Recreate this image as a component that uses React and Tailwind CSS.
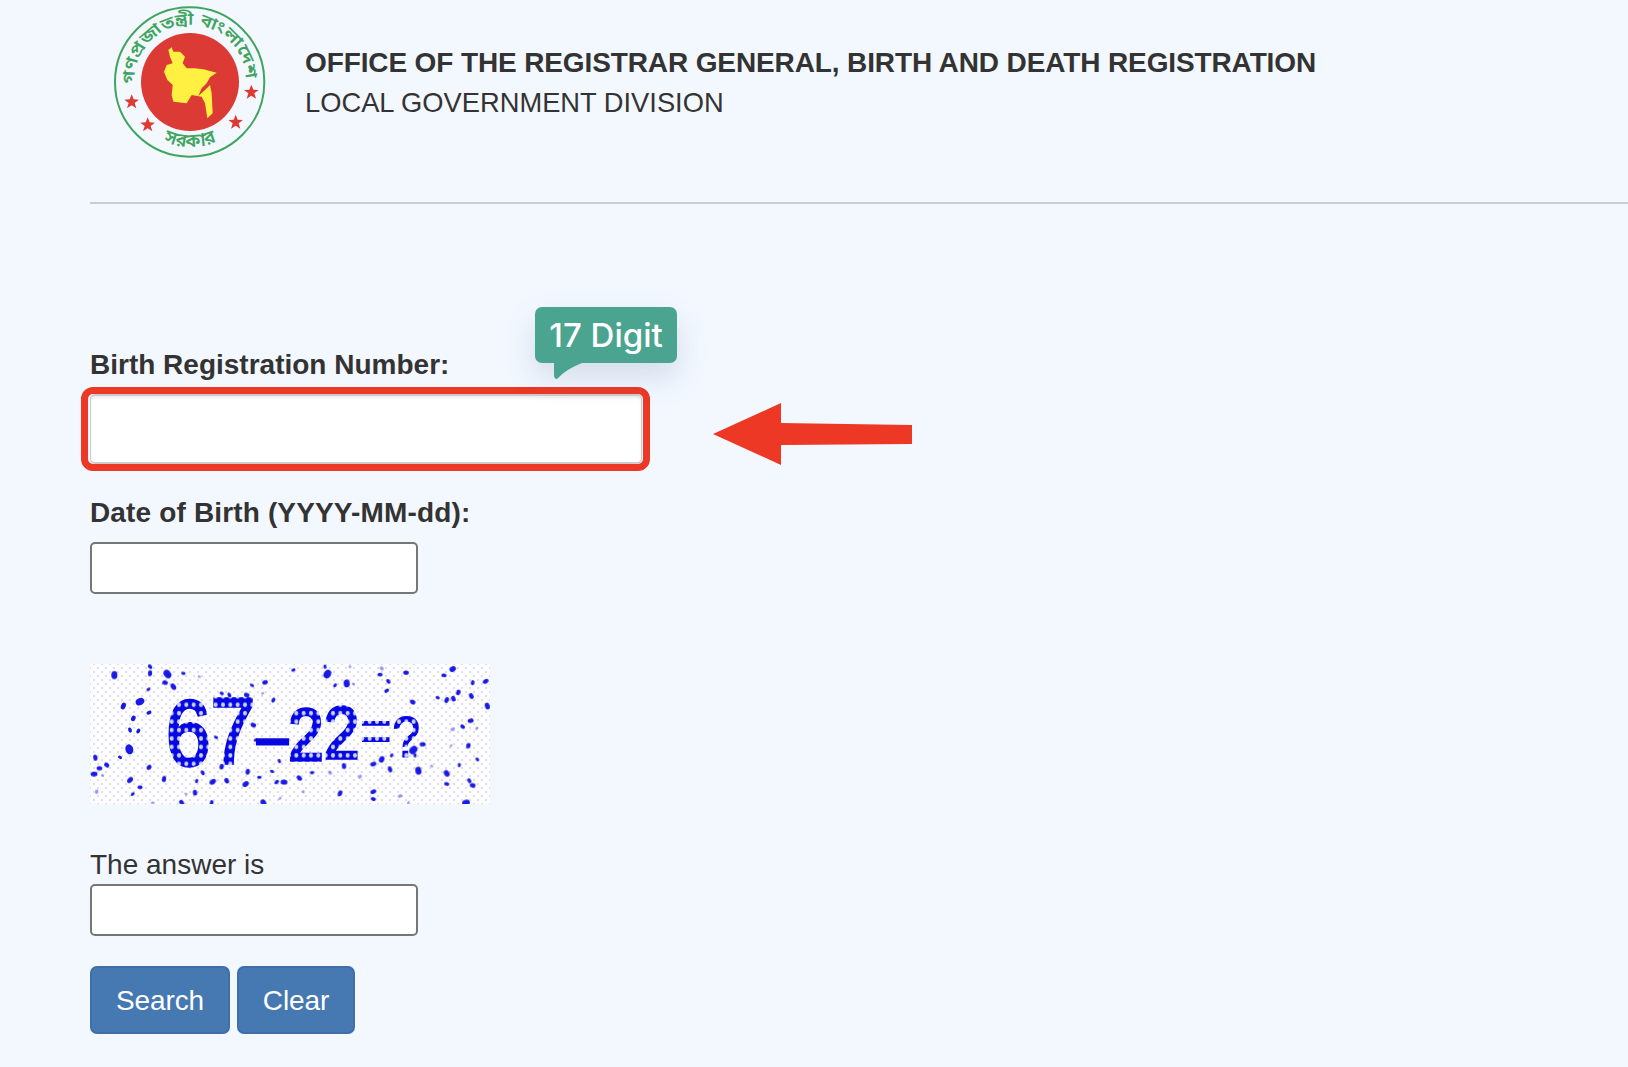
const SPECKS = [
  [103,75,7],[210,50,6],[210,70,7],[262,72,8],[310,70,5],[280,110,8],[255,98,5],[205,118,5],[358,80,4],[180,155,8],[130,168,8],[207,188,6],[160,205,5],[150,240,6],[175,243,6],
  [148,298,9],[120,322,5],[46,323,7],[80,345,5],[42,372,8],[68,376,4],[58,355,5],[150,390,8],[180,412,6],[207,352,5],[252,387,7],[158,432,5],[50,425,4],[305,458,7],[395,458,6],[550,458,6],
  [425,130,5],[448,135,6],[500,135,5],[548,130,4],[516,106,5],[555,97,5],[580,150,6],[640,60,5],[742,72,8],[735,50,5],[765,106,5],[800,100,7],[820,102,4],[810,50,4],[905,55,4],[900,74,6],[925,94,6],[978,68,5],[920,122,6],
  [1092,76,6],[1118,57,6],[1178,98,6],[1217,94,7],[1135,127,5],[1174,138,7],[1100,150,7],[1120,146,5],[1073,143,5],[1222,168,8],[998,156,5],[1172,212,7],[1148,230,6],[1118,238,4],[1190,235,4],
  [1028,283,7],[1000,300,8],[1005,316,5],[1113,287,4],[1165,287,5],[1192,328,5],[1138,345,5],[1100,370,6],[1100,402,6],[1168,392,6],[1178,406,5],[880,425,7],[880,447,6],[960,438,4],[780,430,7],
  [880,342,7],[905,328,6],[930,358,7],[935,316,5],[1015,362,7],[1055,348,4],[792,348,7],[750,368,4],[696,368,5],[658,384,7],[612,396,6],[590,396,6],[538,382,5],[497,402,6],[503,365,7],[398,395,8],[425,350,5],[368,368,6],[350,393,5],[440,392,5],
  [576,364,5],[598,333,5],[520,225,5],[527,270,5],[408,262,5],[1158,458,7],[985,458,4],[218,458,4],[840,380,4],[670,425,4],[600,445,4],[345,428,5],[318,432,4],
];

const BENGALI = '"Noto Sans Bengali", "Noto Sans", "Liberation Sans", sans-serif';

function Logo() {
  return (
    <svg viewBox="0 0 600 510" className="w-[200px] h-[170px] shrink-0">
      <defs>
        <path id="seal-top" d="M 133 252 A 167 167 0 0 1 467 232" />
        <path id="seal-bottom" d="M 205 416 A 195 195 0 0 0 395 416" />
      </defs>
      <circle cx="299" cy="246" r="224" fill="#f3f8ff" stroke="#3fa45e" strokeWidth="6" />
      <circle cx="300" cy="246" r="147" fill="#dc3a34" />
      <path
        fill="#fff042"
        d="M235 150 L245 142 L250 155 L270 155 L285 170 L278 190 L290 205 L315 205 L340 208 L380 218 L360 232 L350 250 L335 265 L325 288 L345 270 L360 255 L365 280 L368 340 L352 355 L345 310 L335 290 L305 285 L290 310 L250 305 L245 285 L248 255 L232 240 L222 215 L230 195 L248 190 L240 170 Z"
      />
      <g fill="#dc3a34">
        <polygon points="125,283 131,298 147,299 134,309 139,325 125,316 111,325 116,309 103,299 119,298" />
        <polygon points="173,352 179,367 195,368 182,378 187,394 173,385 159,394 164,378 151,368 167,367" />
        <polygon points="437,344 443,359 459,360 446,370 451,386 437,377 423,386 428,370 415,360 431,359" />
        <polygon points="484,254 490,269 506,270 493,280 498,296 484,287 470,296 475,280 462,270 478,269" />
      </g>
      <text fontSize="50" fontWeight="600" fill="#3fa45e" style={{ fontFamily: BENGALI }}>
        <textPath href="#seal-top" textLength="530" lengthAdjust="spacingAndGlyphs">গণপ্রজাতন্ত্রী বাংলাদেশ</textPath>
      </text>
      <text fontSize="56" fontWeight="600" fill="#3fa45e" textAnchor="middle" style={{ fontFamily: BENGALI }}>
        <textPath href="#seal-bottom" startOffset="50%">সরকার</textPath>
      </text>
    </svg>
  );
}

function Captcha() {
  return (
    <svg viewBox="30 42 1200 420" className="w-[400px] h-[140px] block mt-[70px]">
      <defs>
        <pattern id="captcha-dots" width="24" height="24" patternUnits="userSpaceOnUse">
          <rect width="24" height="24" fill="#fdfdff" />
          <circle cx="6" cy="6" r="3" fill="#d4d4dc" />
          <circle cx="18" cy="18" r="3" fill="#d9d4e2" />
        </pattern>
        <pattern id="captcha-rings" width="22" height="22" patternUnits="userSpaceOnUse">
          <rect width="22" height="22" fill="#0707e2" />
          <circle cx="11" cy="11" r="6" fill="#c9d2ff" />
        </pattern>
        <filter id="captcha-blur">
          <feGaussianBlur stdDeviation="1.6" />
        </filter>
      </defs>
      <rect x="30" y="42" width="1200" height="420" fill="url(#captcha-dots)" />
      <g filter="url(#captcha-blur)">
        {SPECKS.map(([x, y, r], i) => (
          <ellipse
            key={i}
            cx={x}
            cy={y}
            rx={r * 1.3}
            ry={r * (i % 3 === 0 ? 1.7 : 0.9)}
            transform={`rotate(${(i * 47) % 180} ${x} ${y})`}
            fill="#0a0ae6"
            opacity={r < 5 ? 0.4 : 0.95}
          />
        ))}
      </g>
      <text
        transform="scale(1 1.15)"
        fill="url(#captcha-rings)"
        stroke="url(#captcha-rings)"
        strokeWidth="9"
        style={{ fontFamily: '"Liberation Sans", sans-serif' }}
      >
        <tspan x="258" y="300" fontSize="240">6</tspan>
        <tspan x="392" y="296" fontSize="240">7</tspan>
        <tspan x="532" y="282" fontSize="165" strokeWidth="8" fill="#0707e2" stroke="#0707e2">–</tspan>
        <tspan x="625" y="287" fontSize="190">2</tspan>
        <tspan x="732" y="283" fontSize="190">2</tspan>
        <tspan x="838" y="270" fontSize="170" strokeWidth="0">=</tspan>
        <tspan x="937" y="278" fontSize="150" strokeWidth="3">?</tspan>
      </text>
    </svg>
  );
}

function Annotations() {
  return (
    <>
      <div className="absolute left-[-9px] top-[-7px] w-[569px] h-[84px] border-[7px] border-[#ec3825] rounded-[12px] pointer-events-none" />
      <div className="absolute left-[445px] top-[-87px] w-[142px] h-[56px] rounded-[7px] bg-[#4aa48f] text-white text-[33px] font-medium leading-[56px] text-center font-['Inter',sans-serif] shadow-[0_14px_30px_rgba(90,110,150,0.2)]">
        17 Digit
        <svg viewBox="0 0 28 16" className="absolute left-[19px] top-[55px] w-[28px] h-[18px]">
          <path d="M0 0 L28 0 Q12 6 3 16 Q0 16 0 12 Z" fill="#4aa48f" />
        </svg>
      </div>
      <svg viewBox="0 0 200 64" className="absolute left-[623px] top-[9px] w-[200px] h-[64px]">
        <path d="M0 31 L68 0 L68 20 L199 22 L199 41 L68 42 L68 62 Z" fill="#ec3825" />
      </svg>
    </>
  );
}

function Label({ className, children }) {
  return <label className={`block text-[#333] text-[28px] leading-[34px] ${className}`}>{children}</label>;
}

function TextField({ className }) {
  return <input type="text" className={`block bg-white rounded-[5px] outline-none ${className}`} />;
}

export default function App() {
  return (
    <div className="min-h-screen bg-[#f3f8ff] font-['Liberation_Sans',sans-serif] overflow-hidden">
      <header className="h-[202px] pl-[90px] flex items-start">
        <Logo />
        <div className="ml-[15px] pt-[45px] text-[#333]">
          <h1 className="text-[28px] tracking-[-0.12px] leading-[36px] font-bold whitespace-nowrap">
            OFFICE OF THE REGISTRAR GENERAL, BIRTH AND DEATH REGISTRATION
          </h1>
          <p className="text-[27.3px] leading-[36px] mt-[4px] whitespace-nowrap">LOCAL GOVERNMENT DIVISION</p>
        </div>
      </header>
      <div className="ml-[90px] h-[2px] bg-[#cbcdd0]" />

      <form className="pl-[90px]">
        <Label className="font-bold mt-[144px]">Birth Registration Number:</Label>
        <div className="relative mt-[12px] w-[552px]">
          <TextField className="w-[552px] h-[70px] border-y-2 border-x border-[#cccccc] shadow-[inset_0_2px_3px_rgba(0,0,0,0.08)]" />
          <Annotations />
        </div>

        <Label className="font-bold mt-[32px] tracking-[0.15px]">Date of Birth (YYYY-MM-dd):</Label>
        <TextField className="mt-[12px] w-[328px] h-[52px] border-2 border-[#767676]" />

        <Captcha />

        <Label className="mt-[44px]">The answer is</Label>
        <TextField className="mt-[2px] w-[328px] h-[52px] border-2 border-[#767676]" />

        <div className="mt-[30px] flex gap-[7px]">
          <button type="button" className="w-[140px] h-[68px] pt-[1px] rounded-[7px] bg-[#4678b2] border-2 border-[#3f6fa6] text-white text-[28px] tracking-[-0.1px]">
            Search
          </button>
          <button type="button" className="w-[118px] h-[68px] pt-[1px] rounded-[7px] bg-[#4678b2] border-2 border-[#3f6fa6] text-white text-[28px] tracking-[-0.1px]">
            Clear
          </button>
        </div>
      </form>
    </div>
  );
}
